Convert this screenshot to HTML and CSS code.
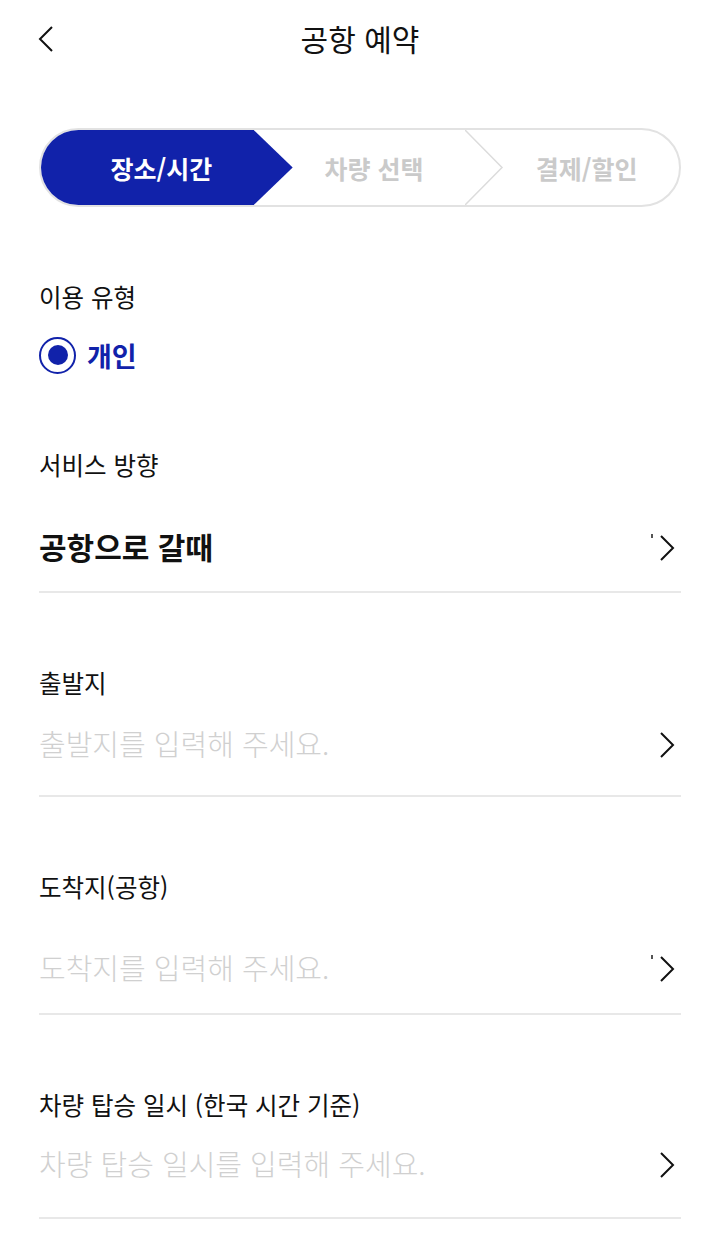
FILE: index.html
```html
<!DOCTYPE html>
<html lang="ko">
<head>
<meta charset="utf-8">
<title>공항 예약</title>
<link rel="stylesheet" href="styles.css">
</head>
<body>
<header class="header">
  <button class="back" aria-label="뒤로">
    <svg width="18" height="28" viewBox="0 0 18 28"><polyline points="15,2 3,14 15,26" fill="none" stroke="#111" stroke-width="2"/></svg>
  </button>
  <h1 class="title">공항 예약</h1>
  <span></span>
</header>
<main class="page">
  <div class="stepper">
    <div class="step step-active"><span>장소/시간</span></div>
    <div class="step step-sep"><span>차량 선택</span>
      <svg class="sep" width="40" height="75" viewBox="0 0 40 75"><polyline points="0,0 37,37.5 0,75" fill="none" stroke="#dcdcdc" stroke-width="1.5"/></svg>
    </div>
    <div class="step"><span>결제/할인</span></div>
  </div>

  <section class="group">
    <div class="label">이용 유형</div>
    <label class="radio"><span class="radio-dot"></span><span class="radio-text">개인</span></label>
  </section>

  <section class="field field-first">
    <div class="label">서비스 방향</div>
    <div class="row row-1">
      <span class="value">공항으로 갈때</span>
      <span class="chev-wrap"><span class="tick"></span><svg class="chev" width="18" height="28" viewBox="0 0 18 28"><polyline points="3,2 15,14 3,26" fill="none" stroke="#111" stroke-width="2"/></svg></span>
    </div>
  </section>

  <section class="field">
    <div class="label">출발지</div>
    <div class="row row-2">
      <span class="placeholder">출발지를 입력해 주세요.</span>
      <span class="chev-wrap"><svg class="chev" width="18" height="28" viewBox="0 0 18 28"><polyline points="3,2 15,14 3,26" fill="none" stroke="#111" stroke-width="2"/></svg></span>
    </div>
  </section>

  <section class="field">
    <div class="label">도착지(공항)</div>
    <div class="row row-3">
      <span class="placeholder">도착지를 입력해 주세요.</span>
      <span class="chev-wrap"><span class="tick"></span><svg class="chev" width="18" height="28" viewBox="0 0 18 28"><polyline points="3,2 15,14 3,26" fill="none" stroke="#111" stroke-width="2"/></svg></span>
    </div>
  </section>

  <section class="field">
    <div class="label">차량 탑승 일시 (한국 시간 기준)</div>
    <div class="row row-4">
      <span class="placeholder">차량 탑승 일시를 입력해 주세요.</span>
      <span class="chev-wrap"><svg class="chev" width="18" height="28" viewBox="0 0 18 28"><polyline points="3,2 15,14 3,26" fill="none" stroke="#111" stroke-width="2"/></svg></span>
    </div>
  </section>
</main>
</body>
</html>
```
FILE: styles.css
```css
* { box-sizing: border-box; }
html, body { margin: 0; padding: 0; background: #fff; }
body {
  font-family: "Noto Sans CJK KR", "Noto Sans", sans-serif;
  color: #111;
  width: 720px;
}
.header {
  height: 76px;
  display: grid;
  grid-template-columns: 1fr auto 1fr;
  align-items: center;
}
.back {
  justify-self: start;
  margin-left: 37px;
  padding: 0;
  border: 0;
  background: none;
  display: flex;
  margin-top: 1px;
}
.title {
  margin: 0;
  font-size: 30px;
  font-weight: 400;
  letter-spacing: 0;
  line-height: 40px;
}
.page { padding: 0 39px; }

.stepper {
  margin-top: 52px;
  height: 79px;
  border: 2px solid #e2e2e2;
  border-radius: 40px;
  display: flex;
  overflow: hidden;
}
.step {
  flex: 1;
  position: relative;
  display: flex;
  align-items: center;
  justify-content: center;
  padding-left: 28px;
  font-size: 25px;
  font-weight: 700;
  color: #cacaca;
}
.step span { position: relative; z-index: 2; }
.step-active { background: #1122aa; color: #fff; z-index: 1; }
.step-active::after {
  content: "";
  position: absolute;
  left: 100%;
  top: 0;
  width: 39px;
  height: 100%;
  background: #1122aa;
  clip-path: polygon(0 0, 100% 50%, 0 100%);
}
.sep { position: absolute; left: calc(100% - 1px); top: 0; }

.label {
  font-size: 24.5px;
  line-height: 30px;
}
.group { margin-top: 75px; }
.radio {
  margin-top: 23px;
  height: 40px;
  display: flex;
  align-items: center;
  gap: 11px;
}
.radio-dot {
  width: 37px;
  height: 37px;
  border: 2.5px solid #1122aa;
  border-radius: 50%;
  display: flex;
  align-items: center;
  justify-content: center;
}
.radio-dot::before {
  content: "";
  width: 20px;
  height: 20px;
  border-radius: 50%;
  background: #1122aa;
}
.radio-text {
  font-size: 27px;
  font-weight: 700;
  color: #1122aa;
}

.field { margin-top: 75px; border-bottom: 2px solid #e8e8e8; }
.field-first { margin-top: 75px; }
.row {
  height: 40px;
  display: flex;
  align-items: center;
  justify-content: space-between;
}
.row-1 { margin-top: 46px; margin-bottom: 25px; }
.row-2 { margin-top: 25px; margin-bottom: 32px; }
.row-3 { margin-top: 45px; margin-bottom: 26px; }
.row-4 { margin-top: 23px; margin-bottom: 34px; }
.value {
  font-size: 30px;
  font-weight: 700;
}
.placeholder {
  font-size: 29px;
  font-weight: 300;
  color: #d0d0d0;
}
.chev-wrap {
  display: flex;
  align-items: center;
  margin-right: 5px;
  position: relative;
}
.chev { display: block; margin-top: 3px; }
.tick {
  position: absolute;
  left: -7px;
  top: 3px;
  width: 2px;
  height: 4px;
  background: #555;
}
```
